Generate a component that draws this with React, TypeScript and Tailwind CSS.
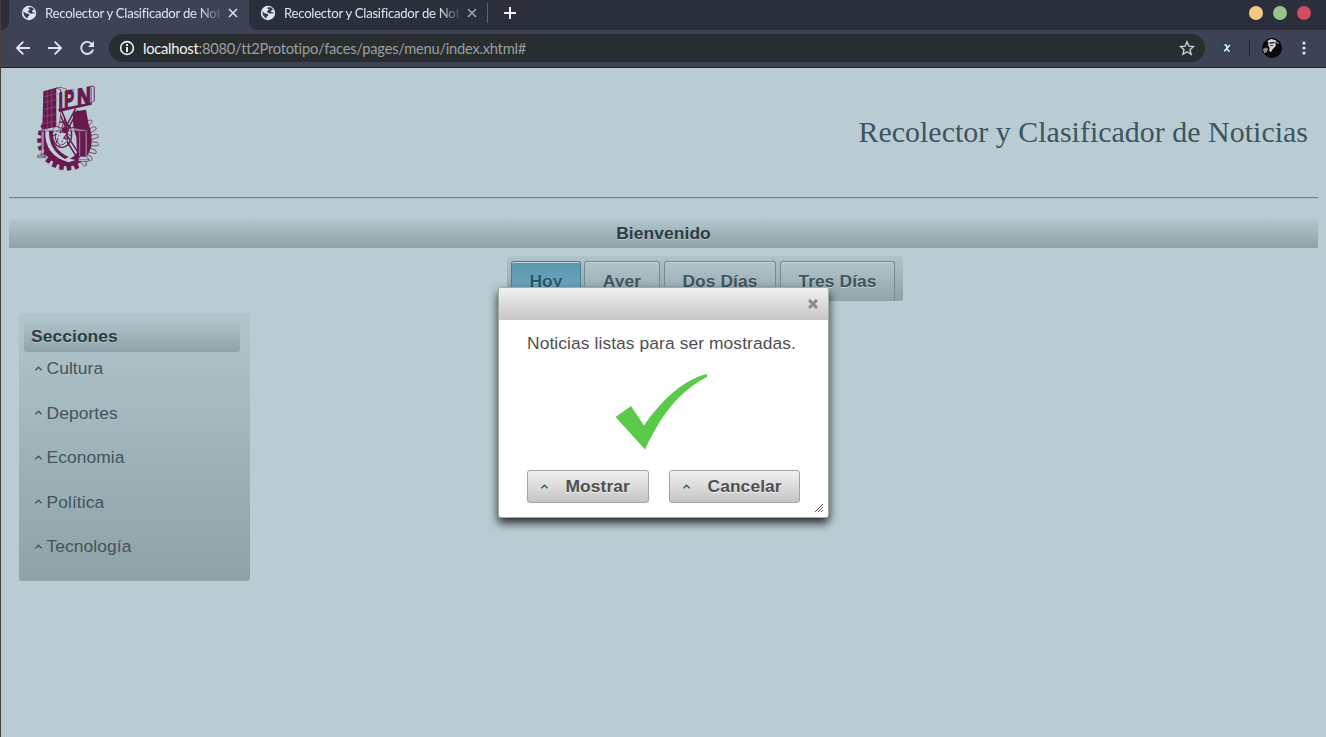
import React from "react";

const sections = ["Cultura", "Deportes", "Economia", "Política", "Tecnología"];

function Globe() {
  return (
    <svg className="size-[16px] shrink-0" viewBox="0 0 16 16">
      <circle cx="8" cy="8" r="7.2" fill="#dfe4f0" />
      <path d="M2.2 6.2 5 8.4l2.6.4.8 1.6-1.6 1-.2 1.8-1.5-.4L3 10.2ZM7.2 2.6l3.6-.4 2.3 2.2-1.5.8-.8 1.7 2.7.5.7 1.2-2.2-.3-2 .4-2.8-1.5.3-1.6 2-1-1.8-.6Z" fill="#343a49" />
    </svg>
  );
}

function Cross({ color }: { color: string }) {
  return (
    <svg className="size-[10px] shrink-0" viewBox="0 0 10 10" fill="none" stroke={color} strokeWidth="1.5">
      <path d="m1 1 8 8M9 1 1 9" />
    </svg>
  );
}

function TabTitle() {
  return (
    <span className="w-[175px] shrink-0 overflow-hidden whitespace-nowrap text-[13.2px] tracking-[-0.28px] text-[#dfe4f0] [mask-image:linear-gradient(to_right,black_154px,transparent_179px)]">
      Recolector y Clasificador de Noticias
    </span>
  );
}

function Caret({ color }: { color: string }) {
  return (
    <svg className="h-[5px] w-[7px] shrink-0" viewBox="0 0 7 5" fill="none" stroke={color} strokeWidth="1.4">
      <path d="m.4 4.3 3.1-3 3.1 3" />
    </svg>
  );
}

function Browser() {
  return (
    <header className="h-[68px] border-b border-[#20242c] bg-[#3d4254] font-['Lato',sans-serif] tracking-normal">
      <div className="flex h-[30px] bg-[#3d4254]">
        <div className="w-[8px] rounded-br-[8px] bg-[#2a2f3b]" />
        <div className="flex w-[240px] items-center bg-[#3d4254] pb-[4px] pl-[12px]">
          <Globe />
          <span className="w-[8px]" />
          <TabTitle />
          <span className="w-[8px]" />
          <Cross color="#dfe4f0" />
        </div>
        <div className="flex flex-1 items-center rounded-bl-[8px] bg-[#2a2f3b] pb-[4px] pl-[11px]">
          <Globe />
          <span className="w-[8px]" />
          <TabTitle />
          <span className="w-[8px]" />
          <Cross color="#a0a5b2" />
          <span className="ml-[10px] h-[20px] w-px bg-[#5d6270]" />
          <svg className="ml-[16px] size-[12px]" viewBox="0 0 12 12" stroke="#eef1f8" strokeWidth="2">
            <path d="M6 0v12M0 6h12" />
          </svg>
          <div className="ml-auto mr-[15px] flex gap-[10px]">
            <span className="size-[14px] rounded-full bg-[#f2cb83]" />
            <span className="size-[14px] rounded-full bg-[#99c58b]" />
            <span className="size-[14px] rounded-full bg-[#d14a64]" />
          </div>
        </div>
      </div>
      <div className="flex h-[36px] items-center pl-[14px]">
        <svg className="h-[16px] w-[72px]" viewBox="0 0 72 16" fill="none" stroke="#dfe4f0" strokeWidth="1.9">
          <path d="M15 8H2M8.3 1.7 2 8l6.3 6.3M33 8h13M39.7 1.7 46 8l-6.3 6.3" />
        </svg>
        <svg className="-ml-[8px] size-[16px]" viewBox="0 0 16 16" fill="none" stroke="#dfe4f0" strokeWidth="1.9">
          <path d="M13.2 4.6A6 6 0 1 0 14 9.4" />
          <path d="M15 1v6H9l2.2-2.2L13 3Z" fill="#dfe4f0" stroke="none" />
        </svg>
        <div className="ml-[14px] flex h-[28px] w-[1096px] items-center rounded-full bg-[#282e30] pl-[10px] pr-[10px]">
          <svg className="size-[16px]" viewBox="0 0 16 16" fill="none" stroke="#eef1f5" strokeWidth="1.6">
            <circle cx="8" cy="8" r="6.4" />
            <path d="M8 7v5M8 4v2" strokeWidth="1.9" />
          </svg>
          <span className="ml-[8px] whitespace-nowrap pb-px text-[14.7px] tracking-[-0.25px] text-[#9a9fa0]">
            <span className="text-[#f4f5f6]">localhost</span>:8080/tt2Prototipo/faces/pages/menu/index.xhtml#
          </span>
          <svg className="ml-auto size-[16px]" viewBox="0 0 24 24" fill="none" stroke="#cdd1d8" strokeWidth="2">
            <path d="m12 2.7 2.8 6.5 7 .6-5.3 4.7 1.6 6.9-6.1-3.7-6.1 3.7 1.6-6.9-5.3-4.7 7-.6Z" />
          </svg>
        </div>
        <svg className="ml-[16px] size-[12px]" viewBox="0 0 12 12">
          <rect width="12" height="12" rx="1.5" fill="#2d4650" />
          <path d="M3.5 3H5l2.4 6.2h1.4M9 3 3.2 9.2" fill="none" stroke="#fff" strokeWidth="1.3" />
        </svg>
        <span className="ml-[16px] h-[16px] w-px bg-[#20242c]" />
        <svg className="ml-[12px] size-[20px]" viewBox="0 0 20 20">
          <circle cx="10" cy="10" r="10" fill="#08090b" />
          <path d="M5.2 3 9 1.1l5 1.2-.5 2 .2 3.6-1.7 1.9-1.2 1.2-2 3.2-1.6-1.6.4-3L6.2 7.6 6.4 4.5Z" fill="#d2d4d5" />
          <path d="M.8 11 4 9.5l2.2 1.5-1.4 3-2.3 1.4Z" fill="#8c8e90" />
          <path d="m7 4.5 5-.8 1 1.5-5 .8ZM8 7.2l3-.2v1L8 8Z" fill="#3a3c40" />
          <path d="m14 2.5 3.3 3-1.5.6-2-1.5Z" fill="#77797c" />
        </svg>
        <svg className="ml-[20px] h-[14px] w-[4px]" viewBox="0 0 4 14" fill="#dfe4f0">
          <circle cx="2" cy="2" r="1.6" /><circle cx="2" cy="7" r="1.6" /><circle cx="2" cy="12" r="1.6" />
        </svg>
      </div>
    </header>
  );
}

function Logo() {
  const plum = "#681a4d";
  const pale = "#b9ccd4";
  const teeth = Array.from({ length: 20 }, (_, i) => i * 15.5 - 52).filter((a) => a < 222);
  return (
    <svg className="h-[95px] w-[75px]" viewBox="0 0 225 285">
      <g transform="translate(112 181)">
        {teeth.map((a) => {
          const hollow = a < 58;
          return (
            <path
              key={a}
              transform={`rotate(${a})`}
              d={hollow ? "M66 -7 88 -10Q97 -7 93 0L66 6Z" : "M66 -7 89 -8 91 4 66 7Z"}
              fill={hollow ? pale : plum}
              stroke={plum}
              strokeWidth={hollow ? 2 : 1}
            />
          );
        })}
        <path d="M0 78A77 80 0 0 1-77 0V-35L18-86 56-92 64-48Q76-20 72 18A74 80 0 0 1 0 78Z" fill={plum} />
      </g>
      <path d="M84 98 132 88Q122 130 139 172L141 218Q124 243 92 237 60 215 57 150Z" fill={pale} />
      <path d="m112 150 32-59M105 145l32-59M84 90l26 58M93 88l24 58M111 166l37 57M102 170l38 61" fill="none" stroke={plum} strokeWidth="4.5" />
      <path d="M56 147Q62 218 126 242L103 250Q48 228 43 155Z" fill={plum} />
      <path d="M46 152Q42 225 116 247L137 240Q60 226 57 146Z" fill="#c6cfdc" />
      <path d="M66 151Q65 209 116 231L105 237Q55 210 57 151Z" fill={plum} />
      <ellipse cx="96" cy="164" rx="29" ry="38" fill="none" stroke={plum} strokeWidth="4" />
      <ellipse cx="94" cy="170" rx="18" ry="24" fill="none" stroke={plum} strokeWidth="3" />
      <path d="m76 135 50 35M69 167l62-26M79 190l26-74 9 82M87 201l35-62" fill="none" stroke={plum} strokeWidth="3" />
      <path d="m73 155 20 9-8 10M92 176l16 6-18 11" fill="none" stroke="#c6cfdc" strokeWidth="5" />
      <path d="m36 146 44-6 24 7 28-3 41 7v3h-24l-44-3-31 2H32Z" fill={pale} fillOpacity=".6" stroke={plum} strokeWidth="1.5" />
      <circle cx="106" cy="150" r="10" fill={plum} />
      <path d="M34 154h8v70h6v9H23v-8h11ZM166 154h5v76h-5Z" fill={pale} fillOpacity=".65" stroke={plum} strokeWidth="1.5" />
      <path d="M149 156v72" stroke="#b5b9c8" strokeWidth="2" />
      <path d="M152 229h18l5 6v9h-30v-9Z" fill={pale} stroke={plum} strokeWidth="2" />
      <path d="M23 229h25M146 238h28" stroke={plum} strokeWidth="1.5" />
      <path d="m40 34 38-11v117l-41 8Z" fill={plum} />
      <path d="m78 24 14 5v75l-6 36-8-1Z" fill={pale} stroke={plum} strokeWidth="1.8" />
      <path d="M52 31v114M65 27v115M39 51l39-10 14 4M39 68l39-9 14 4M39 88l39-8M39 110l39-8M38 131l40-8" fill="none" stroke="#99799a" strokeWidth="1.2" />
      <path d="m78 24 15-2 17 6v9M92 29l-1 62M118 31l10-3 6 3M177 21l10-3 6 3v43" fill="none" stroke={plum} strokeWidth="1.8" />
      <path d="m85 87 100-20v7L87 96Z" fill={plum} />
      <path d="m184 18 8 1v45l-8 4Z" fill={pale} stroke={plum} strokeWidth="1.8" />
      <g fontFamily="Liberation Sans, sans-serif" fontWeight="bold" fill={plum} stroke={plum} strokeWidth="3">
        <text transform="translate(86 88) skewY(-10) scale(.86 1.4)" fontSize="50">I</text>
        <text transform="translate(103 86) skewY(-10) scale(.88 1.5)" fontSize="50">P</text>
        <text transform="translate(141 78) skewY(-10) scale(1.16 1.46)" fontSize="50">N</text>
      </g>
    </svg>
  );
}

function DayTab({ label, className }: { label: string; className: string }) {
  return (
    <div className={`h-[40px] rounded-t-[3px] border border-b-0 pt-[7px] text-center font-bold shadow-[inset_0_1px_0_#c1d1d7] [text-shadow:0_1px_0_rgba(255,255,255,.35)] ${className}`}>
      {label}
    </div>
  );
}

function DialogButton({ label, className }: { label: string; className: string }) {
  return (
    <button className={`flex h-[33px] items-center rounded-[3px] border border-[#a3a3a3] bg-linear-to-b from-[#f1f1f1] to-[#c5c5c5] pl-[13px] font-bold text-[#4f4f4f] [text-shadow:0_1px_0_rgba(255,255,255,.7)] ${className}`}>
      <Caret color="#1d5a6e" />
      <span className="ml-[17.5px] pb-[2px]">{label}</span>
    </button>
  );
}

function Dialog() {
  return (
    <div className="absolute left-[497px] top-[287px] h-[231px] w-[331px] rounded-[3px] border border-[#a8a8a8] bg-white text-[#4f4f4f] shadow-[0_5px_10px_rgba(0,0,0,.8)]">
      <div className="flex h-[32px] items-center justify-end rounded-t-[2px] bg-linear-to-b from-[#f1f1f1] to-[#c5c5c5] pr-[10px]">
        <svg className="size-[10px]" viewBox="0 0 10 10" stroke="#8b8b8b" strokeWidth="3">
          <path d="m1 1 8 8M9 1 1 9" />
        </svg>
      </div>
      <p className="ml-[28px] mt-[10px] h-[26px] whitespace-nowrap leading-[26px]">Noticias listas para ser mostradas.</p>
      <svg className="ml-[116px] mt-[17px] h-[77px] w-[93px]" viewBox="0 0 93 77">
        <path d="m.5 44 15.5-11 13 19.5C44 31 66 7 92 1v3C64 18 45 44 30 76.5Z" fill="#5acb49" />
      </svg>
      <div className="ml-[28px] mt-[20px] flex gap-[20px]">
        <DialogButton label="Mostrar" className="w-[122px]" />
        <DialogButton label="Cancelar" className="w-[131px]" />
      </div>
      <svg className="absolute bottom-[5px] right-[5px] size-[8px]" viewBox="0 0 8 8" stroke="#555" strokeWidth="1">
        <path d="m0 8 8-8M3 8l5-5M6 8l2-2" />
      </svg>
    </div>
  );
}

export default function App() {
  return (
    <div className="relative h-[737px] w-[1326px] overflow-hidden border-l border-[#483f3e] bg-[#b9ccd4] font-['Liberation_Sans',sans-serif] text-[17.4px] leading-[24px] tracking-[0.09px] text-[#42545c]">
      <Browser />
      <main className="px-[8px]">
        <div className="flex h-[129px] items-start justify-between pl-[21px] pr-[10px] pt-[12px]">
          <Logo />
          <h1 className="mt-[35px] whitespace-nowrap font-['Liberation_Serif',serif] text-[29.92px] leading-[34px] tracking-[0.03px] text-[#3f545c]">
            Recolector y Clasificador de Noticias
          </h1>
        </div>
        <hr className="h-[2px] border-x-0 border-b border-t border-b-[#aabdc5] border-t-[#73868e]" />
        <div className="mt-[20px] h-[29px] bg-linear-to-b from-[#b1c5cc] to-[#8fa2a8] pt-[2px] text-center font-bold text-[#2a3d45] [text-shadow:0_1px_0_rgba(255,255,255,.3)]">
          Bienvenido
        </div>
        <div className="ml-[498px] mt-[8px] flex h-[45px] w-[396px] gap-[4px] rounded-[3px] bg-linear-to-b from-[#afc3ca] to-[#8fa2a8] pl-[4px] pt-[5px]">
          <DayTab label="Hoy" className="-mr-px w-[70px] border-[#44819c] bg-linear-to-b from-[#5996b0] to-[#79aabf] text-[#1d5a70]" />
          <DayTab label="Ayer" className="w-[76px] border-[#788b92] bg-linear-to-b from-[#b1c5cc] to-[#91a4aa]" />
          <DayTab label="Dos Días" className="w-[112px] border-[#788b92] bg-linear-to-b from-[#b1c5cc] to-[#91a4aa]" />
          <DayTab label="Tres Días" className="w-[115px] border-[#788b92] bg-linear-to-b from-[#b1c5cc] to-[#91a4aa]" />
        </div>
        <nav className="ml-[10px] mt-[12px] h-[268px] w-[231px] rounded-[3px] bg-linear-to-b from-[#b1c5cc] to-[#8fa2a8] pl-[5px] pt-[6px]">
          <h3 className="h-[33px] w-[216px] rounded-[3px] bg-linear-to-b from-[#b1c5cc] to-[#8fa2a8] pl-[7px] pt-[5px] font-bold text-[#2a3d45] [text-shadow:0_1px_0_rgba(255,255,255,.3)]">
            Secciones
          </h3>
          <ul className="pl-[11px] pt-[4px]">
            {sections.map((name) => (
              <li key={name} className="flex h-[44.5px] items-start gap-[4.5px]">
                <span className="flex h-[24px] items-center"><Caret color="#42545c" /></span>
                {name}
              </li>
            ))}
          </ul>
        </nav>
      </main>
      <Dialog />
    </div>
  );
}
